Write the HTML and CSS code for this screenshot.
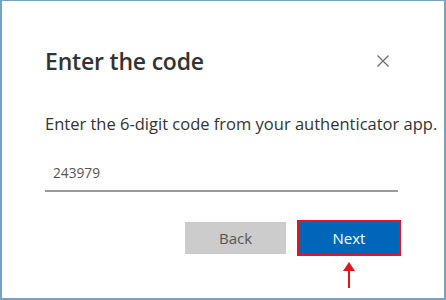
FILE: index.html
```html
<!DOCTYPE html>
<html lang="en">
<head>
    <meta charset="UTF-8">
    <title>Enter the code</title>
    <link rel="stylesheet" href="styles.css">
</head>
<body>
    <div class="frame">
        <div class="dialog">
            <div class="dialog-header">
                <h1>Enter the code</h1>
                <button class="close" aria-label="Close">
                    <svg width="12" height="12" viewBox="0 0 12 12">
                        <path d="M0.5 0.5 L11.5 11.5 M11.5 0.5 L0.5 11.5" stroke="#6b6b6b" stroke-width="1.2" fill="none"/>
                    </svg>
                </button>
            </div>

            <p class="hint">Enter the 6-digit code from your authenticator app.</p>

            <div class="code-field">243979</div>

            <div class="actions">
                <button class="btn btn-back">Back</button>
                <div class="next-wrap">
                    <button class="btn btn-next">Next</button>
                    <svg class="arrow" width="14" height="26" viewBox="0 0 14 26">
                        <polygon points="7,0 13,9 1,9" fill="#e8141b"/>
                        <rect x="6" y="8" width="2" height="18" fill="#e8141b"/>
                    </svg>
                </div>
            </div>
        </div>
    </div>
</body>
</html>
```

FILE: styles.css
```css
body {
    margin: 0;
    padding: 0;
    background-color: #fff;
    font-family: 'Open Sans', 'Noto Sans', sans-serif;
    color: #333;
}

.frame {
    width: 446px;
    height: 300px;
    box-sizing: border-box;
    border: 2px solid #74a3c5;
    border-top-width: 1px;
    background-color: #fff;
}

.dialog {
    padding: 44px 43px 0 43px;
}

.dialog-header {
    display: flex;
    justify-content: space-between;
    align-items: center;
}

h1 {
    margin: 0;
    font-size: 23px;
    font-weight: 600;
    line-height: 32px;
    color: #333;
    letter-spacing: -0.2px;
}

.close {
    background: none;
    border: none;
    padding: 0;
    margin-right: 12px;
    width: 12px;
    height: 12px;
    display: flex;
}

.hint {
    margin: 36px 0 0 0;
    font-size: 16.5px;
    line-height: 22px;
    color: #333;
    white-space: nowrap;
}

.code-field {
    margin-top: 28px;
    padding: 0 0 7px 8px;
    width: 345px;
    font-size: 13.7px;
    line-height: 20px;
    color: #555;
    border-bottom: 2px solid #9a9a9a;
}

.actions {
    display: flex;
    justify-content: flex-end;
    align-items: flex-start;
    gap: 11px;
    margin-top: 28px;
    margin-right: 0;
}

.btn {
    font-family: 'Open Sans', 'Noto Sans', sans-serif;
    font-size: 15px;
    border: none;
    cursor: pointer;
    height: 32px;
}

.btn-back {
    margin-top: 2px;
    width: 101px;
    background-color: #cccccc;
    color: #555;
}

.next-wrap {
    display: flex;
    flex-direction: column;
    align-items: center;
}

.btn-next {
    width: 104px;
    height: 36px;
    background-color: #0067b8;
    color: #fff;
    border: 2px solid #e8141b;
}

.arrow {
    margin-top: 6px;
}
```
